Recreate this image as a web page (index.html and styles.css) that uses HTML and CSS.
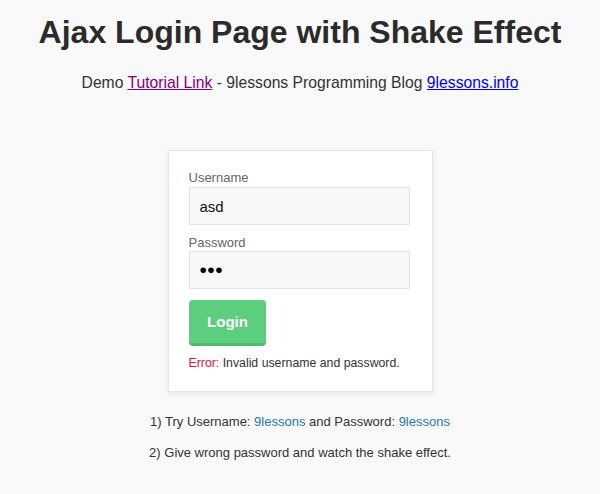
FILE: index.html
```html
<!DOCTYPE html>
<html>
<head>
<meta charset="utf-8">
<title>Ajax Login Page with Shake Effect</title>
<link rel="stylesheet" href="styles.css">
</head>
<body>
<h1 class="title">Ajax Login Page with Shake Effect</h1>
<p class="sub">Demo <a class="visited" href="#">Tutorial Link</a> - 9lessons Programming Blog <a class="link" href="#">9lessons.info</a></p>
<div class="box">
  <form class="form">
    <label class="lbl">Username</label>
    <input class="inp" type="text" value="asd">
    <label class="lbl lbl2">Password</label>
    <input class="inp pw" type="password" value="asd">
    <button class="btn" type="button">Login</button>
    <div class="err"><span class="err-key">Error:</span> Invalid username and password.</div>
  </form>
</div>
<p class="tip tip1">1) Try Username: <span class="hl">9lessons</span> and Password: <span class="hl">9lessons</span></p>
<p class="tip tip2">2) Give wrong password and watch the shake effect.</p>
</body>
</html>
```
FILE: styles.css
```css
html, body {
  margin: 0;
  padding: 0;
  background: #f9f9f9;
  font-family: "Liberation Sans", Arial, sans-serif;
  color: #333;
}
.title {
  margin: 14px 0 0;
  font-size: 32px;
  line-height: 37px;
  font-weight: bold;
  text-align: center;
  color: #2b2b2b;
}
.sub {
  margin: 23px 0 0;
  font-size: 15.7px;
  line-height: 18px;
  text-align: center;
  color: #333;
}
.visited { color: #800080; }
.link { color: #0000ee; }
.box {
  width: 223px;
  margin: 58px auto 0;
  padding: 19px 20px 20px;
  background: #fff;
  border: 1px solid #e6e6e6;
  box-shadow: 0 2px 6px rgba(0,0,0,0.08);
}
.form { display: flex; flex-direction: column; align-items: flex-start; }
.lbl {
  display: block;
  font-size: 13px;
  line-height: 15px;
  color: #666;
  margin-bottom: 2px;
}
.lbl2 { margin-top: 10px; margin-bottom: 1px; }
.inp {
  box-sizing: border-box;
  width: 221px;
  height: 38px;
  margin: 0;
  padding: 0 10px;
  border: 1px solid #e3e3e3;
  background: #f7f7f7;
  font-family: "Liberation Sans", Arial, sans-serif;
  font-size: 15px;
  color: #111;
  outline: none;
}
.pw {
  font-size: 21px;
  letter-spacing: 0.5px;
  color: #000;
}
.btn {
  box-sizing: border-box;
  margin-top: 11px;
  width: 77px;
  height: 46px;
  border: none;
  border-bottom: 3px solid #4cbb6c;
  border-radius: 4px;
  background: #5dcd7e;
  color: #fff;
  font-family: "Liberation Sans", Arial, sans-serif;
  font-size: 15px;
  font-weight: bold;
  padding: 0 0 0 1px;
}
.err {
  margin-top: 10px;
  font-size: 12.3px;
  line-height: 15px;
  color: #333;
  white-space: nowrap;
}
.err-key { color: #e0103a; }
.tip {
  margin: 0;
  font-size: 13px;
  line-height: 15px;
  text-align: center;
  color: #333;
}
.tip1 { margin-top: 22px; }
.tip2 { margin-top: 16px; }
.hl { color: #2677b0; }
```
